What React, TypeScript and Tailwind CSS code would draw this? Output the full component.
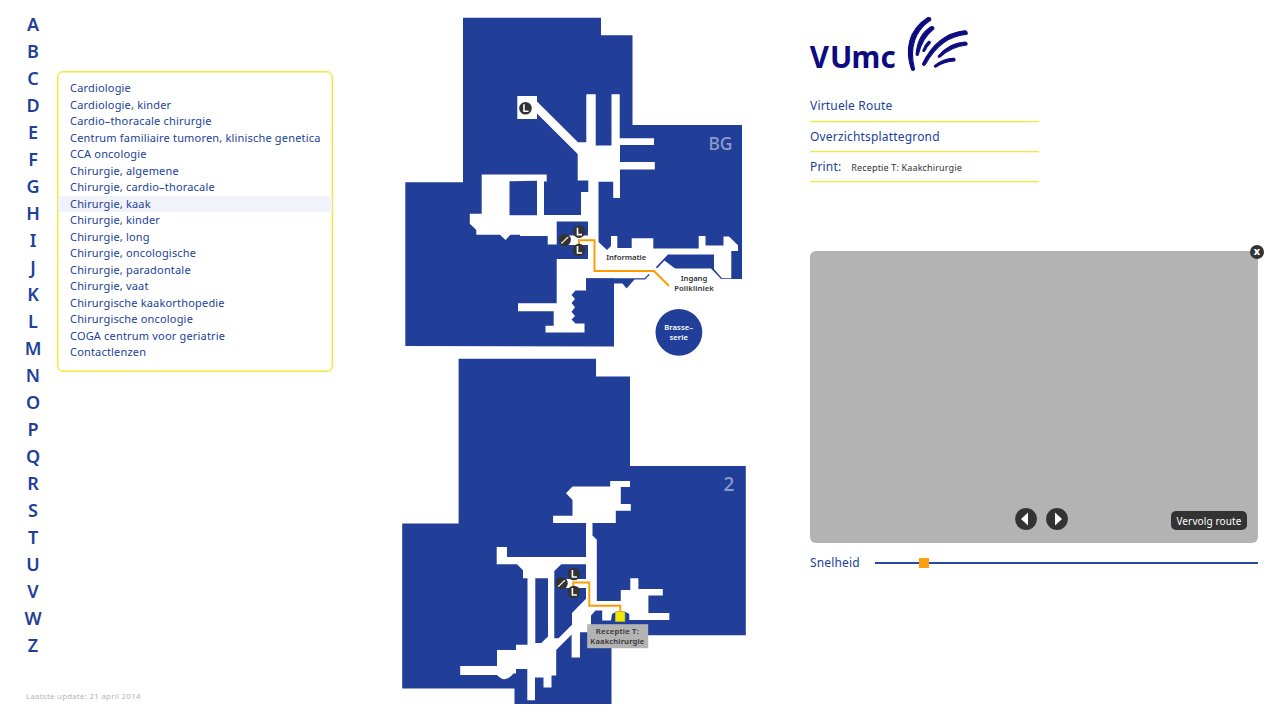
import React from "react";

const letters = "ABCDEFGHIJKLMNOPQRSTUVWZ".split("");

const departments = [
  "Cardiologie",
  "Cardiologie, kinder",
  "Cardio–thoracale chirurgie",
  "Centrum familiaire tumoren, klinische genetica",
  "CCA oncologie",
  "Chirurgie, algemene",
  "Chirurgie, cardio–thoracale",
  "Chirurgie, kaak",
  "Chirurgie, kinder",
  "Chirurgie, long",
  "Chirurgie, oncologische",
  "Chirurgie, paradontale",
  "Chirurgie, vaat",
  "Chirurgische kaakorthopedie",
  "Chirurgische oncologie",
  "COGA centrum voor geriatrie",
  "Contactlenzen",
];

const BLUE = "#213f99";

function Lift({ x, y }: { x: number; y: number }) {
  return (
    <g>
      <circle cx={x} cy={y} r="6.3" fill="#333" />
      <path d={`M${x - 1.5} ${y - 3.9}V${y + 3}H${x + 3}`} fill="none" stroke="#fff" strokeWidth="1.6" />
    </g>
  );
}

function Escalator({ x, y }: { x: number; y: number }) {
  return (
    <g>
      <circle cx={x} cy={y} r="6.2" fill="#333" />
      <path d={`M${x - 3.6} ${y + 2.9}h0.9l5.4-5.3h0.9`} fill="none" stroke="#fff" strokeWidth="1.2" />
    </g>
  );
}

function Label({ x, y, w, fill = "#333", children }: { x: number; y: number; w: number; fill?: string; children: string }) {
  return (
    <text x={x - w / 2} y={y} textLength={w} fill={fill} fontSize="7.7" fontWeight="600">
      {children}
    </text>
  );
}

function FloorPlans() {
  return (
    <svg width="360" height="720" viewBox="398 0 360 720" className="block font-['Noto_Sans',sans-serif]">
      {/* Begane grond */}
      <path fill={BLUE} d="M463 17.8H601V35.3H632.5V125H742V279H614V346.6L405.3 346V182.3H463Z" />
      <path
        fill="#fff"
        d="M598.5 181.7V242L607 250L611 246V236H617.3V248H631.7V238.3H653.3V248.5H698.7V236H705.5V245.5H723.5V236.5H729L738 245.3V251H731.3V278.3H722L714 269V254.5H668L656 267L657 268.5L664.5 260.5L675 268.5H711L721 279V281H614V278.5H586.3V290.5H575.5L571.5 295L575 299L571.5 303L575 307.3L571.5 311.8L575 316L571.5 319.5L575.5 323.5H584.5V332.5H545.5V325.7H553.7V311.3H518V303.3H556.7V259H588V245H567V235.5H588V221.5H556.7V244.5H547.7V236H520V234.7H510.5L505.5 240L500 234.7H476.3V230L469.8 223.8V213.8H481.7V174.4H546.7V181.5H544V215H581V192H588.3V180.5H577.7V154L537 113.5V119H517.3V96H537V101.5L578 142.2H586.3V94.3H595.7V145.5H611.5V94.3H619.7V138.2H654V145H620V162H654.8V169.6H620V198H613.2V181.7Z"
      />
      <path fill={BLUE} d="M509.5 181.2L537 180.8V215.3H509.5Z" />
      <path fill={BLUE} d="M586 278.3H644.5L648.8 273.9L649.8 274.7L645 279.5H634.5L626.5 288.5L622.5 283.5H614V290H586Z" />
      <path d="M579 247V240.3H594.5V271H654L669 286" fill="none" stroke="#f90" strokeWidth="1.9" />
      <Lift x={525.5} y={108.2} />
      <Lift x={579} y={231.6} />
      <Lift x={579} y={250} />
      <Escalator x={564.7} y={240} />
      <text x="708.5" y="150" textLength="24" lengthAdjust="spacingAndGlyphs" fontSize="18.3" fill="#8f9ccb" fontWeight="500">BG</text>
      <Label x={626.2} y={260} w={40}>Informatie</Label>
      <Label x={694} y={281} w={26.5}>Ingang</Label>
      <Label x={694} y={291} w={39.5}>Polikliniek</Label>
      <circle cx="678.9" cy="332.3" r="23.4" fill={BLUE} />
      <Label x={678.7} y={330} w={29} fill="#fff">Brasse–</Label>
      <Label x={678.7} y={340} w={18.5} fill="#fff">serie</Label>

      {/* Tweede verdieping */}
      <path fill={BLUE} d="M458.6 358.7H596V376.4H630V466H745.8V635.3H611.5V704H514.5V688.5H402.2V523.4H458.6Z" />
      <path
        fill="#fff"
        d="M610.2 481H630V487H620.8V504H630.8V510.8H615.8V523H592.5V535.5L596.8 539.7V601H620.8V590H630.3V578.2H638.4V589H662.8V595.5H648.4V613H669.3V620H629.3V614Q621 608 612 614L611 620.5H602.2V610.6H595.5L591 615.5V632.3H580V657.5H571.6V634.5L556.2 650V675.5H551.5V687.5H543.5V677.5H535V700.2H527.3V669H516V673.5H513.5Q505 684 497 675H460.2V666H497V650H516V644.8H527.5V578.3H523V570.3L517 564.2H496.7V547H507V557H586V523H553.1V515.8H572.5V500L566 493.3L572.5 486.6H610.2Z"
      />
      <path fill={BLUE} d="M535.3 578.3H548V636.5L541.3 643H535.3Z" />
      <path fill={BLUE} d="M561.3 564.2H586V579H566V588H586V598.8L572 613V624.7L558.5 638.3H554.3V571Z" />
      <path d="M573.3 589V582.5H589.3V605.7H620.3V612" fill="none" stroke="#f90" strokeWidth="1.9" />
      <Lift x={573.9} y={574} />
      <Lift x={573.9} y={592} />
      <Escalator x={561.5} y={583.2} />
      <rect x="615.4" y="611.7" width="9.5" height="9.8" fill="#f0e800" stroke="#c9bf28" strokeWidth=".6" />
      <rect x="587.2" y="624.2" width="61" height="24" fill="#b3b3b3" />
      <Label x={617.3} y={634} w={43}>Receptie T:</Label>
      <Label x={617.3} y={644} w={54}>Kaakchirurgie</Label>
      <text x="723.5" y="491" fontSize="19" fill="#8f9ccb" fontWeight="500">2</text>
    </svg>
  );
}

function Logo() {
  return (
    <svg width="170" height="80" viewBox="805 0 170 80" className="-ml-[5px] block">
      <g fill="#0c0c80" fontFamily="'Noto Sans',sans-serif" fontWeight="700">
        <text x="809.8 829.9 851.6 880.6" y="67.8" fontSize="29.5">VUmc</text>
      </g>
      <g fill="#0c0c80" stroke="#0c0c80" strokeWidth="1.1" strokeLinejoin="round">
        <path d="M928 17.5Q931 17 930.8 20C915 30 909 48 914.5 69Q913.5 71.5 911.5 69.7C905 50 908 30 928 17.5Z" />
        <path d="M931.5 26.5Q934.5 26.5 933.8 28.8Q922 38 918.3 54.7Q917.2 56.3 916.1 54.7C917 42 922 32 931.5 26.5Z" />
        <path d="M928.7 41.2Q930.8 41 930.2 43Q927 46 924.7 51Q923.3 52.2 922.9 50.5Q924.5 45 928.7 41.2Z" />
        <path d="M964.5 30.8Q968 31 967 34.3C950 36 937 44 925.3 64.5Q923.5 66.5 922.5 64C931 46 945 33 964.5 30.8Z" />
        <path d="M964.8 42Q968 42.5 966.8 45C956 46 948 50 940 57Q938 58 938.3 56C946 47 954 42.5 964.8 42Z" />
        <path d="M953.8 58.2Q956 59 954.5 61Q944 61.5 936 67Q934 67.5 934.4 65.7Q943 58.5 953.8 58.2Z" />
      </g>
    </svg>
  );
}

function StepButton({ d }: { d: string }) {
  return (
    <button className="size-[22px]">
      <svg viewBox="0 0 22 22" className="size-[22px]">
        <circle cx="11" cy="11" r="10.9" fill="#333" />
        <path d={d} fill="#fff" />
      </svg>
    </button>
  );
}

function Divider() {
  return (
    <div className="w-[229px]">
      <div className="h-px bg-[#f2ea34]" />
      <div className="h-px bg-[#fbf9c8]" />
    </div>
  );
}

export default function App() {
  return (
    <div className="flex h-[720px] w-[1280px] overflow-hidden bg-white font-['Noto_Sans',sans-serif] text-[#213f99]">
      <aside className="flex w-[398px] flex-col">
        <div className="flex">
          <nav className="flex w-[57px] flex-col items-center pt-[11px] pl-[9px]">
            {letters.map((l) => (
              <button key={l} className="h-[27px] text-[18px] leading-[27px] font-semibold">{l}</button>
            ))}
          </nav>
          <ul className="mt-[71px] h-[300.5px] w-[275.5px] rounded-[6px] border border-[#f2ea34] pt-[8px] shadow-[inset_0_0_0_0.5px_#f2ea34]">
            {departments.map((name) => (
              <li key={name} className={`h-[16.5px] pl-[12px] text-[11px] leading-[16.5px] tracking-[0.18px] whitespace-nowrap ${name === "Chirurgie, kaak" ? "bg-[#f2f3fa]" : ""}`}>
                {name}
              </li>
            ))}
          </ul>
        </div>
        <footer className="mt-[31px] pl-[26px] text-[7.8px] leading-[12px] tracking-[0.3px] text-[#b3b3b3]">
          Laatste update: 21 april 2014
        </footer>
      </aside>

      <main className="w-[360px]">
        <FloorPlans />
      </main>

      <section className="flex w-[522px] flex-col pl-[52px]">
        <Logo />
        <div className="mt-[11px] w-[229px] text-[12px] tracking-[0.18px]">
          <div className="h-[30px] leading-[29px]">Virtuele Route</div>
          <Divider />
          <div className="h-[28px] leading-[27px]">Overzichtsplattegrond</div>
          <Divider />
          <div className="flex h-[28px] gap-[10px] leading-[27px]">
            <span>Print:</span>
            <span className="pt-px text-[9px] tracking-[0.15px] text-[#333]">Receptie T: Kaakchirurgie</span>
          </div>
          <Divider />
        </div>
        <div className="relative mt-[67.6px] flex h-[292px] w-[448px] items-end rounded-[6px] bg-[#b3b3b3]">
          <button className="absolute -top-[6px] -right-[6px] size-[14px] rounded-full bg-[#333] text-center text-[10.5px] leading-[12.5px] font-extrabold text-white">x</button>
          <div className="flex w-full items-center pr-[11px] pb-[12.6px] pl-[205px]">
            <StepButton d="M6 11L13 4.5V17.5Z" />
            <div className="w-[9px]" />
            <StepButton d="M16 11L9 4.5V17.5Z" />
            <button className="mt-[3px] ml-auto h-[19px] w-[76px] rounded-[5px] bg-[#333] text-[10px] leading-[18px] tracking-[0.13px] whitespace-nowrap text-white">Vervolg route</button>
          </div>
        </div>
        <div className="mt-[9.4px] flex h-[22px] w-[448px] items-center">
          <span className="w-[65px] text-[12px] tracking-[0.15px]">Snelheid</span>
          <div className="relative h-[2px] flex-1 bg-[#2748a4]">
            <span className="absolute -top-[4px] left-[44px] size-[10px] bg-[#ff9f0f]" />
          </div>
        </div>
      </section>
    </div>
  );
}
